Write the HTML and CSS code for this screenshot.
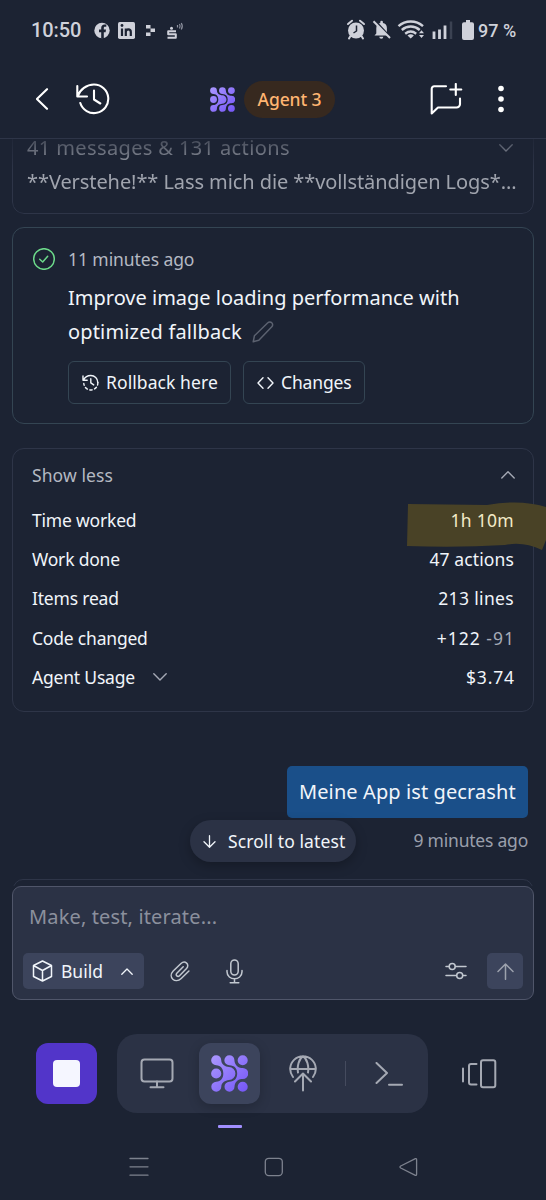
FILE: index.html
```
<!DOCTYPE html>
<html lang="en">
<head>
	<meta charset="UTF-8">
	<title>Agent 3</title>
	<link rel="stylesheet" href="styles.css">
</head>
<body>
	<svg class="defs" width="0" height="0">
		<defs>
			<linearGradient id="violet" x1="0" y1="0" x2="1" y2="1">
				<stop offset="0" stop-color="#ab98ff"/>
				<stop offset="1" stop-color="#7455f6"/>
			</linearGradient>
			<symbol id="agent" viewBox="0 0 37 37">
				<path fill="url(#violet)" d="M5.200 .200A5 5 0 0 1 10.200 5C10.300 9.500 14 11.700 18 12.100A6.400 6.400 0 0 1 18 24.900C14 25.300 10.300 27.500 10.300 31.800A5 5 0 1 1 5.200 26.700C10 26.500 12.300 23 12.300 18.500S10 10.500 5.200 10.300A5 5 0 0 1 5.200 .200ZM18.400 .200A5 5 0 0 1 23.400 5C23.500 9.500 26.500 12.500 30.500 12.900H31.700A5.600 5.600 0 0 1 31.700 24.100H30.500C26.500 24.500 23.700 27.500 23.500 31.800A5 5 0 1 1 18.400 26.700C23.500 26.500 26.200 23.500 26.200 18.500S23.500 10.500 18.400 10.300A5 5 0 0 1 18.400 .200ZM31.700 .200a5 5 0 1 1 0 10.100a5 5 0 1 1 0-10.100ZM5.200 13.400a5 5 0 1 1 0 10.200a5 5 0 1 1 0-10.200ZM31.700 26.700a5 5 0 1 1 0 10.100a5 5 0 1 1 0-10.100Z"/>
			</symbol>
		</defs>
	</svg>

	<div class="status">
		<span class="clock">10:50</span>
		<svg class="st-left" width="92" height="22" viewBox="0 0 92 22">
			<circle cx="8" cy="11.500" r="7.700" fill="#cfd1da"/>
			<path d="M7.200 19.500v-6.300H5v-2.700h2.200V9c0-2.300 1.300-3.500 3.400-3.500h1.700v2.300H11c-.9 0-1.200.5-1.200 1.300v1.400H12l-.4 2.700H9.800v6.300z" fill="#1c2333"/>
			<rect x="24" y="3" width="17" height="17" rx="1.700" fill="#cfd1da"/>
			<path d="M28 9.500V17M31.800 17V9.500M31.800 17v-4c0-3.500 5-3.500 5 0v4" fill="none" stroke="#1c2333" stroke-width="2.200"/>
			<circle cx="28" cy="6.500" r="1.400" fill="#1c2333"/>
			<path d="M52 6h4.500v3.500H52zM52 13.500h4.500V17H52zM56.500 9.500H61V13h-4.500z" fill="#cfd1da"/>
			<circle cx="77.500" cy="9.300" r="1.500" fill="#cfd1da"/>
			<path d="M82 12.200h-7.800v3H81.800v3.600H73.500" fill="none" stroke="#cfd1da" stroke-width="2"/>
			<path d="M83.500 6v2.500M85.500 5c.8 1.300.8 3 0 4.500M87.300 4c1.200 2 1.200 4.500 0 6.500" fill="none" stroke="#8e929f" stroke-width="1.200"/>
		</svg>
		<svg class="st-right" width="107" height="22" viewBox="0 0 107 22">
			<circle cx="10" cy="11.500" r="8" fill="#cfd1da"/>
			<path d="M2 5l4-3.300M18 5l-4-3.300M4.500 17l-1.500 2.500M15.500 17l1.500 2.500" stroke="#cfd1da" stroke-width="2" stroke-linecap="round"/>
			<path d="M10.500 6.500v5.500L7.500 14" fill="none" stroke="#1c2333" stroke-width="1.500"/>
			<path d="M28.500 16.500l1.800-2V9c0-3 1.700-4.700 4-5V3a1.300 1.300 0 0 1 2.600 0v1c2.400.4 4 2 4 5v5.500l2 2zM33.300 17.700h4a2 2 0 0 1-4 0z" fill="#cfd1da"/>
			<path d="M29.300 2L45 19" stroke="#1c2333" stroke-width="2"/>
			<path d="M27.500 2.200L44 19" stroke="#cfd1da" stroke-width="2"/>
			<path d="M52.500 7.200c7-6.300 17.500-6.300 24.500 0M55.800 11c5.200-4.600 12.700-4.600 17.900 0M59.200 14.700c3.500-2.700 7.500-2.700 11 0" fill="none" stroke="#cfd1da" stroke-width="2.400"/>
			<path d="M61.500 16.400q3.200-2.200 6.400 0L64.700 19.500zM73 14.200l2.500-3 2.500 3zM73 16l2.500 3 2.500-3z" fill="#cfd1da"/>
			<path d="M88 12.500V20M93.500 10.500V20M99 6.500V20" stroke="#cfd1da" stroke-width="2.800"/>
			<path d="M105 2.500V20" stroke="#3b4252" stroke-width="2.500"/>
		</svg>
		<svg class="st-batt" width="12" height="20" viewBox="0 0 12 20">
			<path d="M2 2.200h2V0h4v2.200h2a2 2 0 0 1 2 2V18a2 2 0 0 1-2 2H2a2 2 0 0 1-2-2V4.200a2 2 0 0 1 2-2z" fill="#cfd1da"/>
		</svg>
		<span class="percent">97 %</span>
	</div>

	<header class="topbar">
		<svg class="back" width="13" height="22" viewBox="0 0 13 22"><path d="M11 1.200L.900 11 11 20.800"/></svg>
		<svg class="history" width="34" height="32" viewBox="0 0 34 32"><path d="M1.300 3v10.500H11M1.800 13C4 6.500 10.500 1.500 18 1.500a14.300 14.300 0 1 1-13.700 18.500M18 7.500v9l6.300 4"/></svg>
		<svg class="mark" width="25" height="25"><use href="#agent"/></svg>
		<span class="agent-name">Agent 3</span>
		<svg class="new-chat" width="33" height="32" viewBox="0 0 33 32"><path d="M16 3.200H4.200a2.500 2.500 0 0 0-2.500 2.500V30.500L8 24.500h18.500a3.500 3.500 0 0 0 3.500-3.500v-5.500M25.800 1v11M20.300 6.500h11"/></svg>
		<svg class="more" width="6" height="28" viewBox="0 0 6 28"><circle cx="3" cy="3.500" r="2.800"/><circle cx="3" cy="14" r="2.800"/><circle cx="3" cy="24.500" r="2.800"/></svg>
	</header>

	<main class="chat">
		<section class="card summary">
			<div class="row">
				<span class="count">41 messages &amp; 131 actions</span>
				<svg class="chev" width="14" height="8" viewBox="0 0 14 8"><path d="M.800 .800L7 7l6.200-6.200"/></svg>
			</div>
			<p class="preview">**Verstehe!** Lass mich die **vollständigen Logs*...</p>
		</section>

		<section class="card checkpoint">
			<svg class="check" width="22" height="22" viewBox="0 0 22 22"><circle cx="11" cy="11" r="10.300"/><path d="M6.700 11.200l3 2.800 5-5.700"/></svg>
			<div class="body">
				<div class="ago">11 minutes ago</div>
				<div class="title">Improve image loading performance with<br><span class="second">optimized fallback</span>
					<svg class="pencil" width="22" height="22" viewBox="0 0 22 22"><path d="M1.200 20.800l1.200-6L15.800 1.800a2.700 2.700 0 0 1 4 0 2.800 2.800 0 0 1 0 4L6.800 19.300z"/></svg>
				</div>
				<div class="actions">
					<button class="btn rollback">
						<svg width="17" height="17" viewBox="0 0 17 17"><path d="M1 2v4.300h4.200M1.500 6C3 3 5.500 1.500 8.800 1.500a7 7 0 0 1 7 7"/><path stroke-dasharray="2.500 2.500" d="M15.800 8.500a7 7 0 0 1-14 1"/><path d="M8.800 4.700v4.200l2.900 2"/></svg>
						<span>Rollback here</span>
					</button>
					<button class="btn changes">
						<svg width="17" height="12" viewBox="0 0 17 12"><path d="M6 .800L1 6l5 5.200M11 .800L16 6l-5 5.200"/></svg>
						<span>Changes</span>
					</button>
				</div>
			</div>
		</section>

		<section class="card stats">
			<div class="row head">
				<span>Show less</span>
				<svg class="chev" width="14" height="8" viewBox="0 0 14 8"><path d="M.800 7L7 .800 13.200 7"/></svg>
			</div>
			<svg class="marker" width="139" height="49" viewBox="0 0 139 49"><path d="M1 2L80 3Q114-3 139 5V38L135 48Q116 39 98 43Q50 46 0 44Z"/></svg>
			<div class="row"><span class="label">Time worked</span><span class="time">1h 10m</span></div>
			<div class="row"><span class="label">Work done</span><span class="value">47 actions</span></div>
			<div class="row"><span class="label">Items read</span><span class="value lines">213 lines</span></div>
			<div class="row"><span class="label">Code changed</span><span class="value diff">+122 <span class="minus">-91</span></span></div>
			<div class="row">
				<span class="usage"><span class="label">Agent Usage</span>
					<svg class="chev" width="14" height="8" viewBox="0 0 14 8"><path d="M.800 .800L7 7l6.200-6.200"/></svg>
				</span>
				<span class="value cost">$3.74</span>
			</div>
		</section>

		<div class="bubble">Meine App ist gecrasht</div>
		<div class="sent">9 minutes ago</div>
		<button class="scroll">
			<svg width="13" height="13" viewBox="0 0 13 13"><path d="M6.500 .700v11.500M1 6.700l5.500 5.500L12 6.700"/></svg>
			<span>Scroll to latest</span>
		</button>
		<div class="behind"></div>
	</main>

	<section class="composer">
		<div class="placeholder">Make, test, iterate...</div>
		<div class="tools">
			<button class="build">
				<svg class="cube" width="21" height="22" viewBox="0 0 21 22"><path d="M10.500 1l9 4.500v11l-9 4.500-9-4.500v-11zM1.500 5.500l9 5 9-5M10.500 10.500V21"/></svg>
				<span>Build</span>
				<svg class="up" width="12" height="7" viewBox="0 0 12 7"><path d="M.800 6.200L6 1l5.200 5.200"/></svg>
			</button>
			<svg class="clip" width="20" height="22" viewBox="0 0 20 22"><path d="M13.200 6.800L6.800 13.200c-1.800 1.900.9 4.300 2.700 2.500l7-7.200c3.700-4-1.600-8.800-5.500-5L3.200 11c-5.700 6.200 2 13.200 8 7.500L18.900 11"/></svg>
			<svg class="mic" width="17" height="25" viewBox="0 0 17 25"><rect x="4.800" y="1" width="7.400" height="15" rx="3.700"/><path d="M1 11.500v1.300c0 9.200 15 9.200 15 0v-1.300M8.500 19.700v4M4.200 23.800h8.600"/></svg>
			<svg class="tune" width="22" height="18" viewBox="0 0 22 18"><path d="M1 4.500h3M10.500 4.500H21M1 13.500h10.500M18 13.500h3"/><circle cx="7.200" cy="4.500" r="3"/><circle cx="14.700" cy="13.500" r="3"/></svg>
			<button class="send">
				<svg width="17" height="17" viewBox="0 0 17 17"><path d="M8.500 16.300V1M1 8.500L8.500 1 16 8.500"/></svg>
			</button>
		</div>
	</section>

	<nav class="dock">
		<button class="stop"><span></span></button>
		<div class="tabs">
			<svg class="monitor" width="34" height="31" viewBox="0 0 34 31"><rect x="1.500" y="1.500" width="31" height="22" rx="3"/><path d="M17 23.500v5M10.500 29.200h13"/></svg>
			<div class="tab-active"><svg width="37" height="37"><use href="#agent"/></svg></div>
			<svg class="deploy" width="28" height="37" viewBox="0 0 28 37"><path d="M4 22A12.800 12.800 0 1 1 24 22M1.200 14h25.600M9 17.500C8 11 9.800 4 14 1.200M19 17.500C20 11 18.200 4 14 1.200M14 35.500V18.500M6 26.500l8-8 8 8"/></svg>
			<i class="divider"></i>
			<svg class="shell" width="28" height="24" viewBox="0 0 28 24"><path d="M1.500 1L12 11 1.500 21M14 22.800h13"/></svg>
		</div>
		<svg class="panes" width="36" height="30" viewBox="0 0 36 30"><rect x="20" y="1.200" width="14.300" height="27" rx="2"/><path d="M15.500 5H10a2 2 0 0 0-2 2v16.500a2 2 0 0 0 2 2h5.500M2 9.500v13"/></svg>
	</nav>
	<div class="indicator"></div>

	<footer class="sysnav">
		<svg width="20" height="20" viewBox="0 0 20 20"><path d="M1 1.500h18M1 9.800h18M1 18.200h18"/></svg>
		<svg width="20" height="20" viewBox="0 0 20 20"><rect x="1.300" y="1.300" width="17" height="17.300" rx="3.500"/></svg>
		<svg width="20" height="20" viewBox="0 0 20 20"><path d="M17.400 1.700L2.700 9q-1.500 1 0 2L17.400 18.300q1.200.4 1.200-1V2.700q0-1.400-1.200-1z"/></svg>
	</footer>
</body>
</html>
```
FILE: styles.css
```
* {
	box-sizing: border-box;
}
body {
	margin: 0;
	width: 546px;
	height: 1200px;
	overflow: hidden;
	background: #1c2333;
	color: #f1f5fa;
	font-family: "Noto Sans", sans-serif;
	font-size: 17.500px;
	display: flex;
	flex-direction: column;
}
svg {
	display: block;
	flex: none;
	fill: none;
	stroke-width: 1.500;
	stroke-linecap: round;
	stroke-linejoin: round;
}
.status svg {
	stroke-linecap: butt;
}
.defs {
	position: absolute;
}
button {
	border: 0;
	margin: 0;
	padding: 0;
	color: inherit;
	font: inherit;
	display: flex;
	align-items: center;
}
span {
	white-space: nowrap;
}

/* phone status bar */
.status {
	height: 60px;
	flex: none;
	padding: 0 30px 0 31px;
	display: flex;
	align-items: center;
	font-family: Roboto, sans-serif;
	font-weight: 500;
	color: #cfd1da;
}
.clock {
	font-size: 20px;
	width: 50px;
	letter-spacing: -0.1px;
}
.st-left {
	margin-left: 13px;
}
.st-right {
	margin-left: auto;
}
.st-batt {
	margin-left: 9px;
}
.percent {
	width: 38px;
	margin-left: 4px;
	font-size: 18px;
}

/* header */
.topbar {
	height: 79px;
	flex: none;
	padding: 0 42px 0 36px;
	display: flex;
	align-items: center;
	border-bottom: 1px solid #2e3548;
}
.topbar svg {
	stroke: #fff;
	stroke-width: 2.100;
}
.history {
	margin-left: 27px;
}
.topbar .mark {
	margin-left: 100px;
	stroke: none;
}
.agent-name {
	width: 91px;
	height: 37px;
	margin-left: 9px;
	border-radius: 19px;
	background: #37291f;
	color: #ffb571;
	font-weight: 500;
	letter-spacing: -0.1px;
	line-height: 36px;
	text-align: center;
}
.new-chat {
	margin-left: 95px;
}
.topbar .more {
	margin-left: auto;
	fill: #fff;
	stroke: none;
}

/* conversation */
.chat {
	height: 747px;
	flex: none;
	overflow: hidden;
	position: relative;
	padding: 0 12px;
}
.card {
	border: 1px solid #2e3548;
	border-radius: 12px;
}
.row {
	display: flex;
	align-items: center;
	justify-content: space-between;
}
.chev {
	stroke: #a5a9b5;
	stroke-width: 1.400;
}
.summary {
	height: 95px;
	margin-top: -20px;
	padding: 11px 15px 0 14px;
	color: #a0a4ae;
	font-size: 20px;
	-webkit-mask-image: linear-gradient(transparent 8px, #000 50px);
	mask-image: linear-gradient(transparent 8px, #000 50px);
}
.summary .row {
	height: 34px;
	padding-right: 5px;
}
.count {
	letter-spacing: 0.38px;
	line-height: 20px;
}
.preview {
	margin: 0;
	line-height: 34px;
	letter-spacing: -0.08px;
	white-space: nowrap;
}
.checkpoint {
	height: 197px;
	margin-top: 13px;
	padding: 19px 0 0 20px;
	display: flex;
	border-color: #344553;
}
.check {
	margin-top: 1px;
	stroke: #6cd98a;
}
.body {
	margin-left: 13px;
}
.ago {
	height: 26px;
	line-height: 25px;
	letter-spacing: -0.07px;
	color: #b4b9c2;
}
.title {
	margin-top: 8px;
	font-size: 20px;
	line-height: 33.500px;
}
.second {
	letter-spacing: 0.16px;
}
.pencil {
	display: inline-block;
	margin-left: 5px;
	vertical-align: -4px;
	stroke: #5c6270;
}
.actions {
	display: flex;
	gap: 12px;
	margin-top: 13px;
}
.btn {
	height: 43px;
	border: 1px solid #344553;
	border-radius: 6px;
	background: none;
	padding-left: 13px;
}
.btn svg {
	stroke: #f1f5fa;
	stroke-width: 1.400;
}
.btn span {
	position: relative;
	top: -1px;
}
.rollback {
	width: 163px;
}
.rollback span {
	margin-left: 7px;
	letter-spacing: 0.08px;
}
.changes {
	width: 122px;
}
.changes span {
	margin-left: 7px;
	letter-spacing: -0.15px;
}

.stats {
	height: 264px;
	margin-top: 24px;
	padding: 6px 19px 0 19px;
	position: relative;
}
.stats .row {
	height: 39.400px;
}
.stats .head {
	height: 46px;
	padding-bottom: 7px;
	margin-bottom: -1px;
	color: #b4b9c2;
	letter-spacing: 0.1px;
}
.head .chev {
	margin-right: -1px;
}
.label {
	letter-spacing: -0.2px;
}
.value {
	letter-spacing: 0.12px;
}
.lines {
	letter-spacing: 0.35px;
}
.diff {
	letter-spacing: 1px;
	margin-right: -1px;
}
.cost {
	letter-spacing: 0.8px;
	margin-right: -0.8px;
}
/* highlighter stroke over the time value */
.marker {
	position: absolute;
	left: 394px;
	top: 53px;
	fill: #494226;
}
.time {
	position: relative;
	color: #f3ebc8;
	letter-spacing: 0.3px;
}
.minus {
	color: #a5aab6;
}
.usage {
	display: flex;
	align-items: center;
	gap: 18px;
}
.bubble {
	width: 241px;
	height: 52px;
	margin: 54px 6px 0 auto;
	padding-left: 12px;
	border-radius: 5px;
	background: #1a4f89;
	font-size: 20px;
	letter-spacing: 0.1px;
	line-height: 51px;
}
.sent {
	height: 46px;
	margin-right: 6px;
	line-height: 45px;
	letter-spacing: -0.22px;
	text-align: right;
	color: #9a9fab;
}
.scroll {
	position: absolute;
	left: 190px;
	top: 681px;
	width: 166px;
	height: 42px;
	padding-left: 13px;
	border-radius: 21px;
	background: #2b3245;
	box-shadow: 0 4px 12px rgba(0, 0, 0, 0.25);
	letter-spacing: 0.1px;
}
.scroll svg {
	stroke: #f1f5fa;
	stroke-width: 1.300;
	margin-right: 12px;
}
.behind {
	height: 20px;
	margin: 15px 1px 0;
	border: 1px solid #2e3548;
	border-radius: 12px;
}

/* composer */
.composer {
	height: 114px;
	flex: none;
	margin: 0 12px;
	padding: 10px;
	border: 1.500px solid #50566a;
	border-radius: 9px;
	background: #2b3245;
}
.placeholder {
	height: 41px;
	padding-left: 6px;
	font-size: 20px;
	letter-spacing: 0.14px;
	line-height: 40px;
	color: #8b909d;
}
.tools {
	display: flex;
	align-items: center;
	margin-top: 15px;
}
.tools svg {
	stroke: #c2c8d0;
}
.build {
	width: 121px;
	height: 36px;
	padding: 0 11px 0 9px;
	border-radius: 5px;
	background: #3c445c;
}
.build .cube, .build .up {
	stroke: #f1f5fa;
}
.build .up {
	stroke-width: 1.300;
}
.build span {
	margin-left: 8px;
}
.up {
	margin-left: auto;
}
.clip {
	margin-left: 26px;
}
.mic {
	margin-left: 36px;
}
.tune {
	margin-left: auto;
}
.send {
	width: 36px;
	height: 36px;
	margin-left: 20px;
	border-radius: 5px;
	background: #3c445c;
	justify-content: center;
}
.tools .send svg {
	stroke: #9da2ad;
}

/* bottom dock */
.dock {
	height: 79px;
	flex: none;
	margin-top: 34px;
	padding: 0 49px 0 36px;
	display: flex;
	align-items: center;
}
.stop {
	width: 61px;
	height: 61px;
	border-radius: 12px;
	background: #5235c9;
	justify-content: center;
}
.stop span {
	width: 27px;
	height: 27px;
	border-radius: 4px;
	background: #f5f6ff;
}
.tabs {
	width: 311px;
	height: 79px;
	margin-left: 20px;
	padding: 0 25px 0 23px;
	border-radius: 20px;
	background: #2b3245;
	display: flex;
	align-items: center;
}
.tabs > svg, .panes {
	stroke: #a5a9b3;
	stroke-width: 2;
}
.tab-active {
	width: 61px;
	height: 61px;
	margin-left: 25px;
	border-radius: 12px;
	background: #3c445c;
	box-shadow: 0 3px 12px rgba(0, 0, 0, 0.2);
	display: flex;
	align-items: center;
	justify-content: center;
}
.deploy {
	margin-left: 29px;
}
.divider {
	width: 1px;
	height: 25px;
	margin-left: 28px;
	background: #454b5e;
}
.shell {
	margin-left: auto;
}
.panes {
	margin-left: auto;
}
.indicator {
	width: 24px;
	height: 3px;
	flex: none;
	margin: 12px 0 0 218px;
	border-radius: 1px;
	background: #a18fff;
}
.sysnav {
	display: flex;
	justify-content: space-between;
	margin: 29px 128px 0 129px;
}
.sysnav svg {
	stroke: #7d828e;
	stroke-width: 1.300;
}
```
